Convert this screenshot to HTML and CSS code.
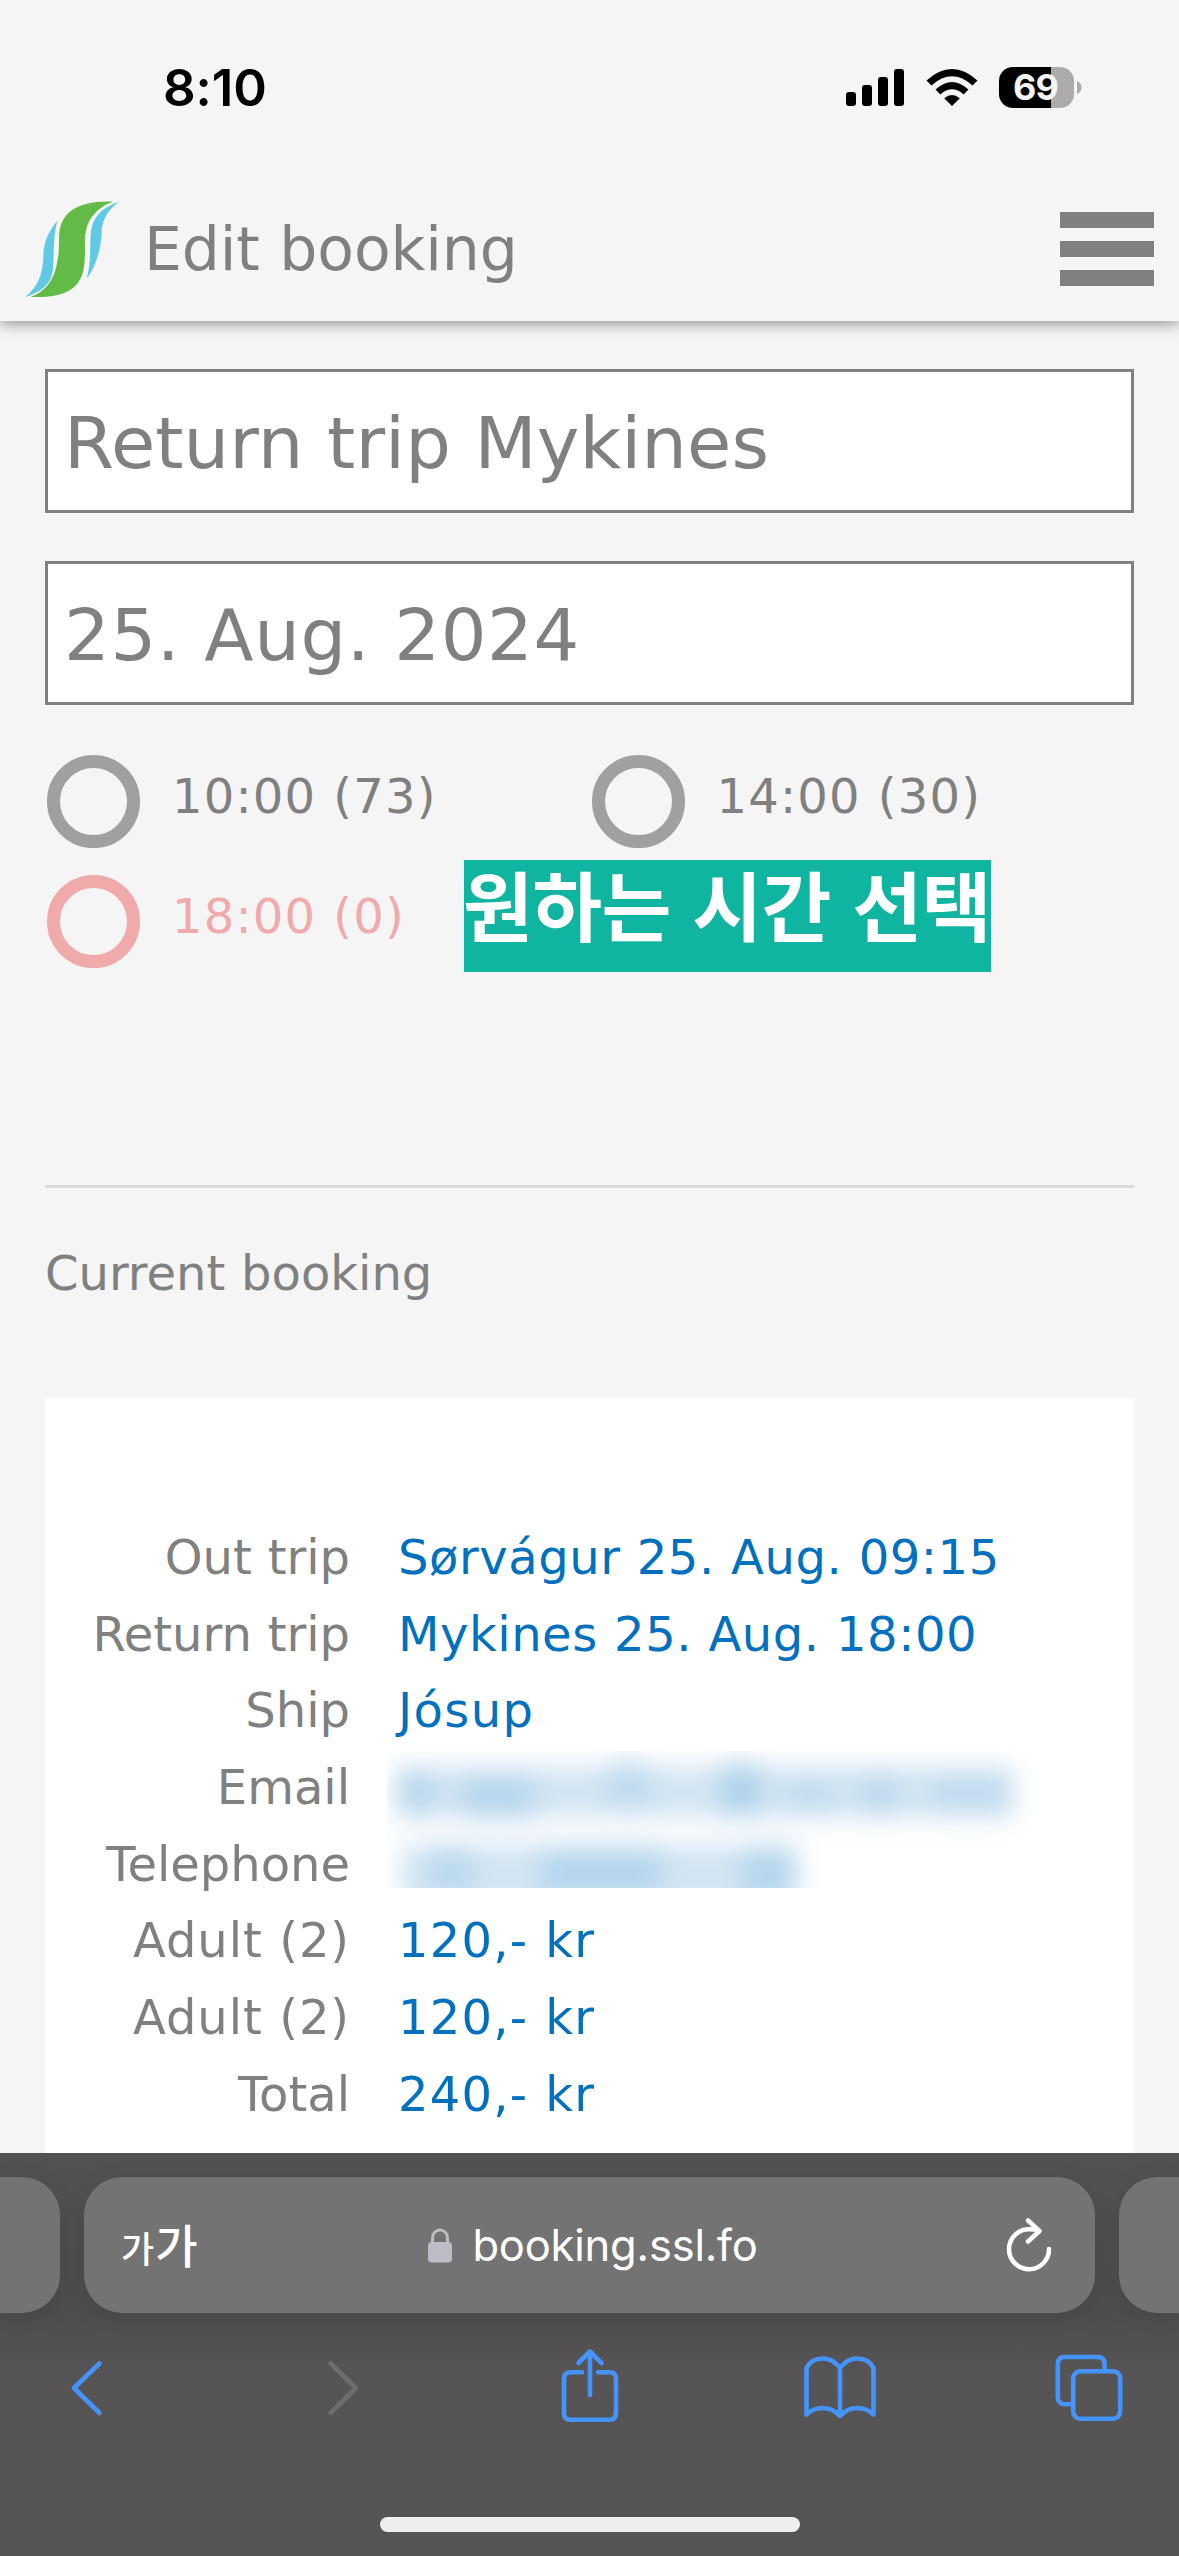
FILE: index.html
```html
<!DOCTYPE html>
<html lang="en">
<head>
<meta charset="utf-8">
<title>Edit booking</title>
<link rel="stylesheet" href="styles.css">
</head>
<body>
<div class="screen">
  <div class="status">
    <span class="time">8:10</span>
    <div class="indicators">
      <svg class="signal" width="58" height="37" viewBox="0 0 58 37"><rect y="23" width="10" height="14" rx="3"/><rect x="16" y="16" width="10" height="21" rx="3"/><rect x="32" y="8" width="10" height="29" rx="3"/><rect x="48" width="10" height="37" rx="3"/></svg>
      <svg class="wifi" width="52" height="37" viewBox="0 0 52 37"><path d="M26 37 L18.2 29.2 Q26 22.8 33.8 29.2Z"/><path d="M9.5 20.5 Q26 5.5 42.5 20.5 L37.6 25.4 Q26 15.2 14.4 25.4Z"/><path d="M.5 11.5 Q26 -11.5 51.5 11.5 L46.6 16.4 Q26 -2 5.4 16.4Z"/></svg>
      <div class="battery"><span>69</span></div>
      <svg class="nub" width="5" height="13" viewBox="0 0 5 13"><path d="M0 0Q4.500 2 4.500 6.500Q4.500 11 0 13Z"/></svg>
    </div>
  </div>
  <header class="header">
    <svg class="logo" width="95" height="97" viewBox="66 482 248 291" preserveAspectRatio="none">
      <path fill="#62bb46" d="M296 484C205 480 156 515 155 590C154 625 156 630 150 665C144 715 120 755 80 770C165 773 215 750 221 670C225 620 218 590 229 555C238 525 262 497 296 484Z"/>
      <path fill="#60c9e4" d="M151 540C125 578 116 605 114 640C113 690 108 730 67 770C112 752 135 730 139 685C142 640 139 590 151 540Z"/>
      <path fill="#60c9e4" d="M311 484C280 512 266 540 266 580C265 620 250 685 227 714C240 665 234 620 238 575C243 530 265 502 311 484Z"/>
    </svg>
    <h1 class="title">Edit booking</h1>
    <div class="menu"><i></i><i></i><i></i></div>
  </header>
  <main class="content">
    <div class="field">Return trip Mykines</div>
    <div class="field date">25. Aug. 2024</div>
    <div class="times">
      <div class="option"><i class="radio"></i><span>10:00 (73)</span></div>
      <div class="option"><i class="radio"></i><span>14:00 (30)</span></div>
      <div class="option full"><i class="radio"></i><span>18:00 (0)</span></div>
      <div class="note" lang="ko">원하는 시간 선택</div>
    </div>
    <h2 class="subtitle">Current booking</h2>
    <dl class="card">
      <dt>Out trip</dt><dd>Sørvágur 25. Aug. 09:15</dd>
      <dt>Return trip</dt><dd>Mykines 25. Aug. 18:00</dd>
      <dt>Ship</dt><dd class="ship">Jósup</dd>
      <dt>Email</dt>
      <dd class="redacted">
        <svg width="645" height="137" viewBox="0 0 645 137">
          <defs><filter id="soft" x="-10%" y="-30%" width="120%" height="160%"><feGaussianBlur stdDeviation="13"/></filter></defs>
          <g filter="url(#soft)" fill="#0070bf">
            <rect x="8" y="16" width="618" height="50" opacity=".18"/>
            <rect x="12" y="20" width="36" height="44" opacity=".12"/><rect x="76" y="26" width="70" height="44" opacity=".13"/><rect x="222" y="4" width="40" height="50" opacity=".1"/><rect x="334" y="10" width="40" height="54" opacity=".17"/><rect x="400" y="28" width="46" height="36" opacity=".08"/><rect x="474" y="24" width="36" height="40" opacity=".1"/><rect x="546" y="26" width="78" height="36" opacity=".09"/>
            <rect x="14" y="94" width="396" height="60" opacity=".18"/>
            <rect x="44" y="98" width="40" height="46" opacity=".12"/><rect x="154" y="98" width="120" height="46" opacity=".14"/><rect x="356" y="98" width="52" height="50" opacity=".14"/>
          </g>
        </svg>
      </dd>
      <dt>Telephone</dt><dd></dd>
      <dt class="fare">Adult (2)</dt><dd class="fare">120,- kr</dd>
      <dt class="fare">Adult (2)</dt><dd class="fare">120,- kr</dd>
      <dt>Total</dt><dd class="fare">240,- kr</dd>
    </dl>
  </main>
  <footer class="browser">
    <div class="tabs">
      <div class="pill side-left"></div>
      <div class="pill address">
        <span class="textsize" lang="ko"><small>가</small>가</span>
        <div class="url">
          <svg width="24" height="35" viewBox="0 0 24 35"><rect y="14" width="24" height="20.500" rx="4" fill="#bdbbc5"/><path d="M4.500 15V9.500a7.500 7.500 0 0 1 15 0V15" fill="none" stroke="#bdbbc5" stroke-width="3"/></svg>
          <span>booking.ssl.fo</span>
        </div>
        <svg class="reload" width="46" height="54" viewBox="0 0 46 54"><path d="M32 12.600C28 11 26 11.200 23 11.200A20 20 0 1 0 43 31M22 2.500L33.500 13L22 23.500"/></svg>
      </div>
      <div class="pill side-right"></div>
    </div>
    <nav class="tools">
      <svg class="back" width="40" height="80" viewBox="0 0 40 80"><path d="M32.500 17.500L7 42L32.500 67"/></svg>
      <svg class="forward" width="40" height="80" viewBox="0 0 40 80"><path d="M7.500 17.500L33 42L7.500 67"/></svg>
      <svg width="64" height="80" viewBox="0 0 64 80"><path d="M24 26.300H12.500Q6 26.300 6 32.800V67.200Q6 73.700 12.500 73.700H51.500Q58 73.700 58 67.200V32.800Q58 26.300 51.500 26.300H40M32 49V6.500M20.500 17L32 5.500L43.500 17"/></svg>
      <svg width="76" height="80" viewBox="0 0 76 80"><path d="M4.500 68.500V22Q9 12.500 21 12.500Q31 12.500 38 22Q45 12.500 55 12.500Q67 12.500 71.500 22V68.500Q65 62 55 62Q45 62 38 70Q31 62 21 62Q11 62 4.500 68.500ZM38 22V69"/></svg>
      <svg width="72" height="80" viewBox="0 0 72 80"><rect x="19.200" y="25.300" width="47" height="47.400" rx="7"/><path d="M18 58.200H11Q3.800 58.200 3.800 51V18.200Q3.800 11 11 11H43.500Q50.600 11 50.600 18.200V24"/></svg>
    </nav>
    <div class="home"></div>
  </footer>
</div>
</body>
</html>
```
FILE: styles.css
```css
* { box-sizing: border-box; }
body { margin: 0; }
.screen {
  width: 1179px;
  height: 2556px;
  overflow: hidden;
  display: flex;
  flex-direction: column;
  background: #f5f5f5;
  color: #808080;
  font-family: Verdana, "DejaVu Sans", sans-serif;
  word-spacing: 0.034em;
}
svg { display: block; flex: none; }

.status {
  height: 177px;
  flex: none;
  display: flex;
  align-items: flex-start;
  justify-content: space-between;
  padding: 0 97px 0 163px;
  color: #000;
  font-family: Inter, sans-serif;
}
.time { font-size: 51px; font-weight: 600; line-height: 175px; letter-spacing: -0.1px; }
.indicators { display: flex; align-items: center; height: 175px; }
.wifi { margin: 0 21px 0 22px; }
.battery {
  width: 75px;
  height: 41px;
  border-radius: 14px;
  background: linear-gradient(90deg, #000 52px, #ababab 52px);
  color: #f5f5f5;
  font-size: 36px;
  font-weight: 700;
  line-height: 41px;
  text-align: center;
  letter-spacing: -1px;
  padding-right: 2px;
}
.nub { margin-left: 3px; fill: #ababab; }

.header {
  height: 144px;
  flex: none;
  display: flex;
  align-items: center;
  padding: 0 25px;
  position: relative;
  z-index: 1;
  background: #f5f5f5;
  box-shadow: 0 2px 14px rgba(0, 0, 0, .45);
  clip-path: inset(0 0 -24px);
}
.title { margin: 0 auto 0 24px; font-size: 60px; font-weight: 400; line-height: 144px; letter-spacing: -0.1px; }
.menu { display: flex; flex-direction: column; gap: 13.300px; }
.menu i { width: 94px; height: 16px; background: #808080; }

.content { flex: 1; min-height: 0; overflow: hidden; padding: 48px 45px 0; }
.field {
  height: 144px;
  margin-bottom: 48px;
  padding: 4px 16px 0;
  border: 3px solid #808080;
  background: #fff;
  font-size: 72px;
  line-height: 134px;
  letter-spacing: 0.100px;
  white-space: nowrap;
}
.date { letter-spacing: 0.600px; }
.times {
  position: relative;
  display: grid;
  grid-template-columns: 1fr 1fr;
  row-gap: 27px;
  padding-top: 2px;
  margin-bottom: 217px;
}
.option { height: 93px; display: flex; gap: 32px; padding-left: 2px; font-size: 48px; letter-spacing: 1.200px; }
.option span { line-height: 83px; white-space: nowrap; }
.radio { width: 93px; height: 93px; border: 13px solid #a0a0a0; border-radius: 50%; }
.full { color: #f0aaaa; }
.full .radio { border-color: #f0aaaa; }
.note {
  position: absolute;
  left: 419px;
  top: 107px;
  width: 527px;
  height: 112px;
  background: #0fb5a1;
  color: #fff;
  font-family: "Noto Sans CJK KR", sans-serif;
  font-size: 76px;
  font-weight: 700;
  line-height: 86px;
  letter-spacing: -0.700px;
  word-spacing: 1px;
  text-indent: -1px;
  white-space: nowrap;
}
.subtitle {
  margin: 0;
  padding: 55px 0 95px;
  border-top: 3px solid #dadcdb;
  font-size: 48px;
  font-weight: 400;
  line-height: 60px;
}
.card {
  margin: 0;
  height: 800px;
  padding-top: 121px;
  display: grid;
  grid-template-columns: 305px 1fr;
  grid-auto-rows: 76.700px;
  column-gap: 48px;
  align-content: start;
  background: #fff;
  font-size: 48px;
  line-height: 76.700px;
  white-space: nowrap;
}
.card dt { text-align: right; }
.card dd { margin: 0; color: #0070bf; letter-spacing: 0.550px; }
.card .ship { letter-spacing: 1.400px; }
.card .fare { letter-spacing: 0.900px; }
.card dd.fare { letter-spacing: 1.200px; }
.redacted svg { margin: 2px 0 0 -11px; overflow: hidden; }

.browser {
  height: 403px;
  flex: none;
  display: flex;
  flex-direction: column;
  padding-top: 24px;
  word-spacing: 0;
  background: linear-gradient(#525252, #4e4c4c 40%, #565454 55%, #545454);
}
.tabs { display: grid; grid-template-columns: 60px 1011px 60px; gap: 24px; height: 136px; }
.pill { background: #747373; border-radius: 38px; box-shadow: 0 4px 24px rgba(0, 0, 0, .09); }
.side-left { border-radius: 0 38px 38px 0; }
.side-right { border-radius: 38px 0 0 38px; }
.address {
  display: grid;
  grid-template-columns: 90px 1fr 90px;
  align-items: center;
  padding: 0 43px 0 37px;
  color: #fff;
}
.textsize { font-family: "Noto Sans CJK KR", sans-serif; font-size: 46px; font-weight: 500; line-height: 130px; white-space: nowrap; }
.textsize small { font-size: 36px; margin-right: 1px; }
.url { display: flex; align-items: center; justify-content: center; gap: 20px; margin-left: 13px; font-family: Inter, sans-serif; font-size: 43.500px; line-height: 136px; letter-spacing: -0.200px; }
.reload { justify-self: end; fill: none; stroke: #fff; stroke-width: 4.500; stroke-linecap: round; stroke-linejoin: round; }
.tools {
  display: grid;
  grid-template-columns: repeat(5, 250px);
  justify-items: center;
  margin: 33px -35.500px 0;
  height: 80px;
}
.tools svg { fill: none; stroke: #4494fc; stroke-width: 4.600; stroke-linecap: round; stroke-linejoin: round; }
.tools .back { margin-right: 6px; }
.tools .forward { margin-left: 7px; stroke: #6e6c6c; }
.home { width: 420px; height: 15px; margin: 91px auto 0; border-radius: 8px; background: #eee; }
```
